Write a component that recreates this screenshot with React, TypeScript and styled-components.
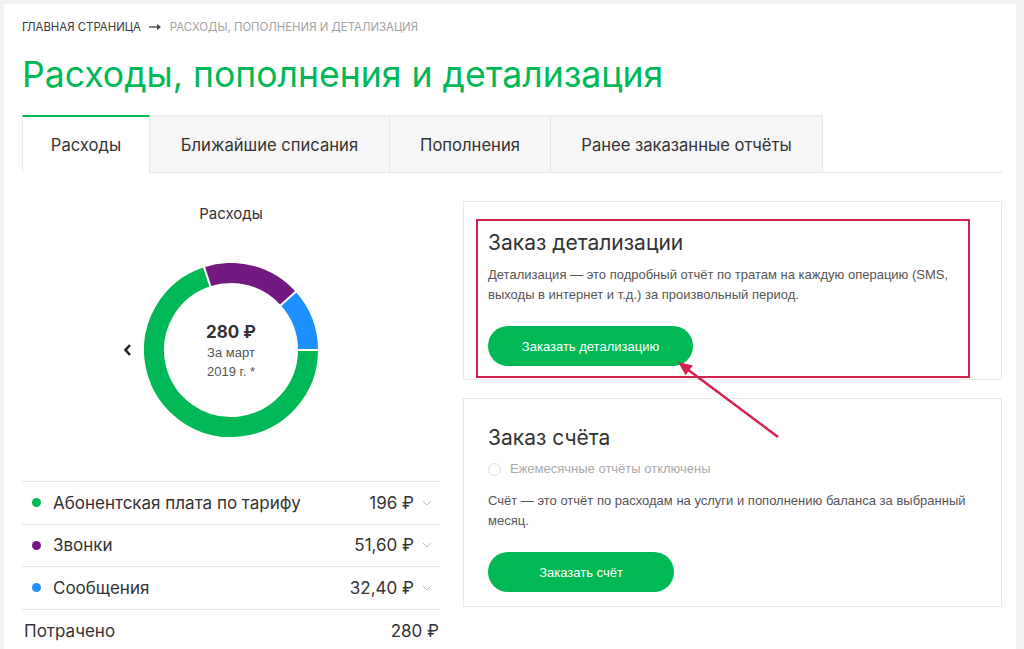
import styled, { createGlobalStyle } from "styled-components";

const GlobalStyle = createGlobalStyle`
  body {
    margin: 0;
    background: #f2f2f2;
    font-family: Inter, "Noto Sans", sans-serif;
    color: #333;
  }
`;

const GREEN = "#00b956";
const PURPLE = "#731982";
const BLUE = "#1e8fff";
const RED = "#d4224d";

const Page = styled.div`
  margin: 4px 8px 0 4px;
  background: #fff;
  min-height: 645px;
  padding: 15px 14px 0 18px;
  box-sizing: border-box;
`;

const Crumbs = styled.div`
  display: flex;
  align-items: center;
  gap: 8px;
  font-size: 11.4px;
  text-transform: uppercase;
  color: #a3a3a3;
  height: 16px;
  span:first-child {
    color: #3a3a3a;
  }
`;

const Title = styled.h1`
  margin: 18px 0 0;
  font-size: 35.6px;
  font-weight: 400;
  color: ${GREEN};
  line-height: 44px;
  height: 44px;
`;

const TabBar = styled.div`
  display: flex;
  margin-top: 18px;
  width: 980px;
  border-bottom: 1px solid #e6e6e6;
  height: 57px;
`;

const Tab = styled.div<{ $active?: boolean; $w: number }>`
  display: flex;
  align-items: center;
  justify-content: center;
  width: ${(p) => p.$w}px;
  font-size: 16.6px;
  color: #333;
  box-sizing: border-box;
  height: ${(p) => (p.$active ? "58px" : "57px")};
  background: ${(p) => (p.$active ? "#fff" : "#f6f6f6")};
  border-top: 2px solid ${(p) => (p.$active ? GREEN : "#ececec")};
  border-right: 1px solid #e6e6e6;
  border-left: ${(p) => (p.$active ? "1px solid #ececec" : "none")};
`;

const Body = styled.div`
  display: grid;
  grid-template-columns: 418px 539px;
  gap: 23px;
  margin-top: 28px;
`;

const LeftCol = styled.div`
  display: flex;
  flex-direction: column;
`;

const ChartTitle = styled.div`
  text-align: center;
  font-size: 15px;
  line-height: 20px;
  margin-top: 3px;
  color: #333;
`;

const ChartRow = styled.div`
  display: grid;
  grid-template-columns: 1fr auto 1fr;
  align-items: center;
  margin-top: 39px;
`;

const Prev = styled.div`
  justify-self: end;
  margin-right: 12px;
  display: flex;
`;

const Donut = styled.div`
  position: relative;
  width: 174px;
  height: 174px;
`;

const Center = styled.div`
  position: absolute;
  inset: 0;
  display: flex;
  flex-direction: column;
  align-items: center;
  justify-content: center;
  padding-top: 2px;
`;

const Total = styled.div`
  font-size: 17px;
  font-weight: 700;
  color: #333;
  line-height: 22px;
`;

const Period = styled.div`
  font-size: 13px;
  color: #555;
  line-height: 19px;
  font-family: "Liberation Sans", Arial, sans-serif;
`;

const List = styled.div`
  margin-top: 44px;
  border-top: 1px solid #e3e3e3;
`;

const Row = styled.div`
  display: flex;
  align-items: center;
  height: 41.5px;
  border-bottom: 1px solid #e3e3e3;
  padding: 0 8px 0 10px;
  font-size: 17px;
  color: #333;
`;

const Dot = styled.span<{ $color: string }>`
  width: 9px;
  height: 9px;
  border-radius: 50%;
  background: ${(p) => p.$color};
  margin-right: 12px;
`;

const Label = styled.span`
  flex: 1;
`;

const Amount = styled.span`
  margin-right: 8px;
`;

const TotalRow = styled.div`
  display: flex;
  justify-content: space-between;
  align-items: center;
  height: 42px;
  padding: 0 1px 0 2px;
  font-size: 17px;
  color: #333;
`;

const RightCol = styled.div`
  position: relative;
  display: flex;
  flex-direction: column;
  gap: 18px;
`;

const Card = styled.div<{ $pad: string }>`
  border: 1px solid #e8e8e8;
  padding: ${(p) => p.$pad};
`;

const Highlight = styled.div`
  border: 2px solid ${RED};
  padding: 8px 10px 10px;
`;

const CardTitle = styled.h2`
  margin: 0;
  font-size: 21px;
  font-weight: 400;
  color: #333;
  line-height: 28px;
`;

const Text = styled.p<{ $gap: number }>`
  margin: ${(p) => p.$gap}px 0 0;
  font-family: "Liberation Sans", Arial, sans-serif;
  font-size: 13px;
  line-height: 20px;
  color: #555;
`;

const Button = styled.button<{ $w: number }>`
  display: block;
  margin-top: 21px;
  width: ${(p) => p.$w}px;
  height: 40px;
  border: none;
  border-radius: 20px;
  background: ${GREEN};
  color: #fff;
  font-family: "Liberation Sans", Arial, sans-serif;
  font-size: 13px;
`;

const Radio = styled.label`
  display: flex;
  align-items: center;
  gap: 9px;
  margin-top: 8px;
  font-family: "Liberation Sans", Arial, sans-serif;
  font-size: 13px;
  color: #aaa;
  line-height: 18px;
  &::before {
    content: "";
    width: 11px;
    height: 11px;
    border: 1px solid #ddd;
    border-radius: 50%;
  }
`;

const Pointer = styled.svg`
  position: absolute;
  left: 200px;
  top: 150px;
`;

const segments = [
  { color: GREEN, from: 90, to: 342 },
  { color: PURPLE, from: 342, to: 408 },
  { color: BLUE, from: 408, to: 450 },
];

function pt(angle: number, r: number) {
  const a = ((angle - 90) * Math.PI) / 180;
  return [87 + r * Math.cos(a), 87 + r * Math.sin(a)];
}

function arc(from: number, to: number, r: number) {
  const [x1, y1] = pt(from, r);
  const [x2, y2] = pt(to, r);
  const large = to - from > 180 ? 1 : 0;
  return `M ${x1} ${y1} A ${r} ${r} 0 ${large} 1 ${x2} ${y2}`;
}

const tabs = [
  { label: "Расходы", w: 128 },
  { label: "Ближайшие списания", w: 240 },
  { label: "Пополнения", w: 161 },
  { label: "Ранее заказанные отчёты", w: 272 },
];

const rows = [
  { color: GREEN, label: "Абонентская плата по тарифу", amount: "196 ₽" },
  { color: PURPLE, label: "Звонки", amount: "51,60 ₽" },
  { color: BLUE, label: "Сообщения", amount: "32,40 ₽" },
];

function ChevronDown() {
  return (
    <svg width="10" height="6" viewBox="0 0 10 6">
      <path d="M1 1 L5 5 L9 1" fill="none" stroke="#bdbdbd" strokeWidth="1" />
    </svg>
  );
}

export default function App() {
  return (
    <>
      <GlobalStyle />
      <Page>
        <Crumbs>
          <span>Главная страница</span>
          <svg width="13" height="8" viewBox="0 0 13 8">
            <path d="M0 4 H11" stroke="#444" strokeWidth="1.3" />
            <path d="M8 1 L12 4 L8 7 Z" fill="#444" />
          </svg>
          <span>Расходы, пополнения и детализация</span>
        </Crumbs>
        <Title>Расходы, пополнения и детализация</Title>
        <TabBar>
          {tabs.map((t, i) => (
            <Tab key={t.label} $w={t.w} $active={i === 0}>
              {t.label}
            </Tab>
          ))}
        </TabBar>
        <Body>
          <LeftCol>
            <ChartTitle>Расходы</ChartTitle>
            <ChartRow>
              <Prev>
                <svg width="9" height="14" viewBox="0 0 9 14">
                  <path d="M7 2 L2.5 7 L7 12" fill="none" stroke="#222" strokeWidth="2.6" />
                </svg>
              </Prev>
              <Donut>
                <svg width="174" height="174" viewBox="0 0 174 174">
                  {segments.map((s) => (
                    <path key={s.color} d={arc(s.from, s.to, 77)} fill="none" stroke={s.color} strokeWidth="20" />
                  ))}
                  {[90, 342, 408].map((a) => {
                    const [x1, y1] = pt(a, 65);
                    const [x2, y2] = pt(a, 89);
                    return <line key={a} x1={x1} y1={y1} x2={x2} y2={y2} stroke="#fff" strokeWidth="2" />;
                  })}
                </svg>
                <Center>
                  <Total>280 ₽</Total>
                  <Period>За март</Period>
                  <Period>2019 г. *</Period>
                </Center>
              </Donut>
              <div />
            </ChartRow>
            <List>
              {rows.map((r) => (
                <Row key={r.label}>
                  <Dot $color={r.color} />
                  <Label>{r.label}</Label>
                  <Amount>{r.amount}</Amount>
                  <ChevronDown />
                </Row>
              ))}
            </List>
            <TotalRow>
              <span>Потрачено</span>
              <span>280 ₽</span>
            </TotalRow>
          </LeftCol>
          <RightCol>
            <Card $pad="17px 31px 1px 12px">
              <Highlight>
                <CardTitle>Заказ детализации</CardTitle>
                <Text $gap={8}>
                  Детализация — это подробный отчёт по тратам на каждую операцию (SMS,
                  <br />
                  выходы в интернет и т.д.) за произвольный период.
                </Text>
                <Button $w={205}>Заказать детализацию</Button>
              </Highlight>
            </Card>
            <Card $pad="25px 31px 14px 24px">
              <CardTitle>Заказ счёта</CardTitle>
              <Radio>Ежемесячные отчёты отключены</Radio>
              <Text $gap={13}>
                Счёт — это отчёт по расходам на услуги и пополнению баланса за выбранный
                <br />
                месяц.
              </Text>
              <Button $w={186}>Заказать счёт</Button>
            </Card>
            <Pointer width="130" height="100" viewBox="0 0 130 100">
              <line x1="115" y1="86" x2="24" y2="18" stroke={RED} strokeWidth="2.5" />
              <polygon points="15,11 29.8,14.6 22.6,24.2" fill={RED} />
            </Pointer>
          </RightCol>
        </Body>
      </Page>
    </>
  );
}
